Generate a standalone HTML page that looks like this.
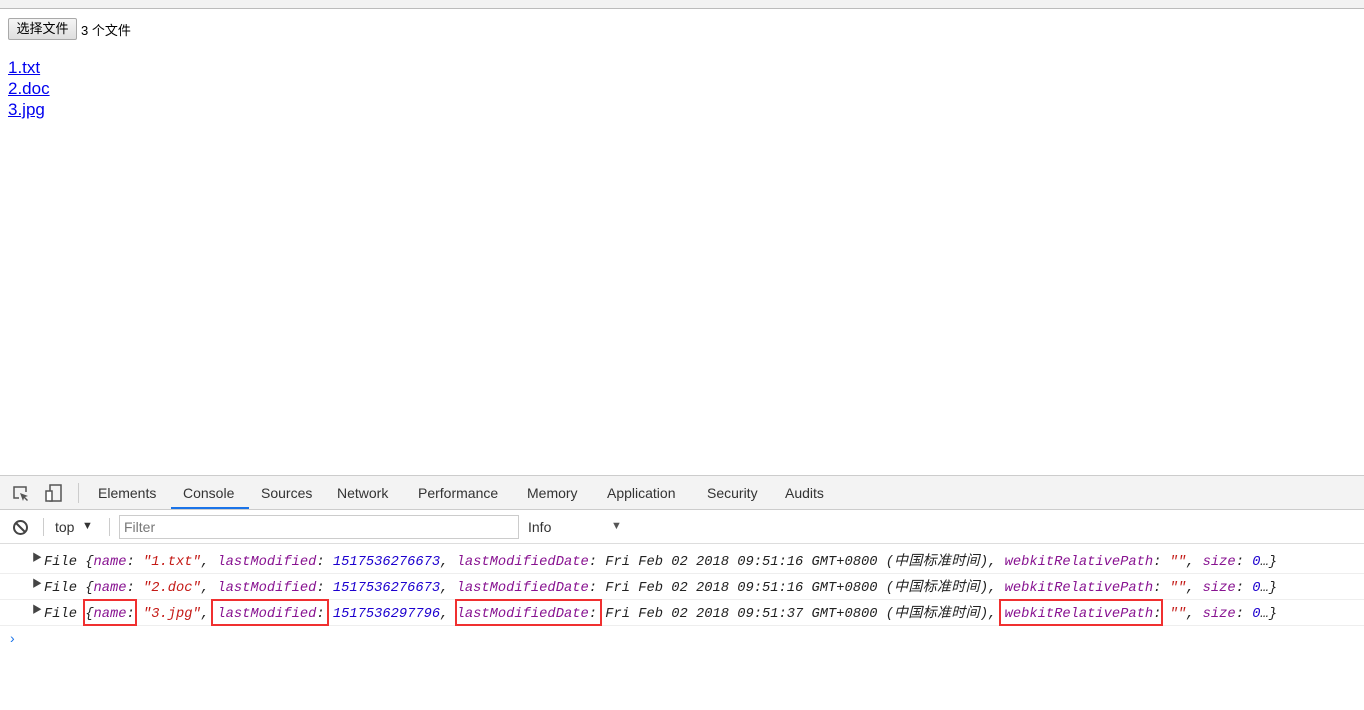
<!DOCTYPE html>
<html><head><meta charset="utf-8"><style>
*{margin:0;padding:0;box-sizing:border-box}
body{width:1364px;height:710px;background:#fff;position:relative;overflow:hidden;font-family:"Liberation Sans","Noto Sans CJK SC",sans-serif}
.bm{position:absolute;left:0;top:0;width:1364px;height:9px;background:#f2f2f2;border-bottom:1px solid #bbb}
.btn{position:absolute;left:8px;top:18px;width:69px;height:22px;border:1px solid #a9a9a9;background:linear-gradient(#f5f5f5,#dedede);font-size:13px;line-height:20px;text-align:center;border-radius:2px}
.cnt{position:absolute;left:81px;top:20px;font-size:13px}
.links{position:absolute;left:8px;top:57px;font-size:17px;line-height:21px}
.links a{color:#00e;text-decoration:underline;display:block}
.dt{position:absolute;left:0;top:475px;width:1364px;height:235px;border-top:1px solid #ccc}
.tb{height:34px;background:#f3f3f3;border-bottom:1px solid #ccc;position:relative;font-size:14px;color:#333}
.tb span{position:absolute;top:9px}
.ul{position:absolute;left:171px;top:31px;width:78px;height:2px;background:#1a73e8}
.fb{height:34px;border-bottom:1px solid #ddd;position:relative;font-size:14px;color:#333}
.row{position:absolute;left:0;width:1364px;height:26px;border-bottom:1px solid #eee;font-family:"Liberation Mono","Noto Sans CJK SC",monospace;font-style:italic;font-size:13.75px;line-height:24px;color:#222;white-space:pre;padding-left:44px}
.tri{position:absolute;left:32px;top:0;font-style:normal;font-size:10px;color:#444}
.k{color:#881391}.s{color:#c41a16}.n{color:#1c00cf}
.cj{font-family:"Noto Sans CJK SC",sans-serif;font-size:14px;letter-spacing:0.3px}
.box{position:absolute;border:2px solid #f03030}
</style></head><body>
<div class="bm"></div>
<div class="btn">选择文件</div>
<div class="cnt">3 个文件</div>
<div class="links"><a>1.txt</a><a>2.doc</a><a>3.jpg</a></div>
<div class="dt">
<div class="tb">
<svg style="position:absolute;left:12px;top:9px" width="18" height="18" viewBox="0 0 18 18"><path d="M7 13H2V2h12v5" fill="none" stroke="#555" stroke-width="1.5"/><path d="M8 8l8 3-3 1 3 3-1 1-3-3-1 3z" fill="#555"/></svg>
<svg style="position:absolute;left:44px;top:7px" width="20" height="20" viewBox="0 0 20 20"><rect x="6" y="2" width="11" height="16" fill="none" stroke="#555" stroke-width="1.5"/><rect x="2" y="8" width="6" height="10" fill="#fff" stroke="#555" stroke-width="1.5"/></svg>
<div style="position:absolute;left:78px;top:7px;width:1px;height:20px;background:#ccc"></div>
<span style="left:98px">Elements</span><span style="left:183px">Console</span><span style="left:261px">Sources</span><span style="left:337px">Network</span><span style="left:418px">Performance</span><span style="left:527px">Memory</span><span style="left:607px">Application</span><span style="left:707px">Security</span><span style="left:785px">Audits</span>
<div class="ul"></div>
</div>
<div class="fb">
<svg style="position:absolute;left:12px;top:9px" width="17" height="17" viewBox="0 0 17 17"><circle cx="8.5" cy="8.5" r="6.5" fill="none" stroke="#444" stroke-width="2"/><path d="M4 4l9 9" stroke="#444" stroke-width="2"/></svg>
<div style="position:absolute;left:43px;top:8px;width:1px;height:18px;background:#ccc"></div>
<span style="position:absolute;left:55px;top:9px">top</span><span style="position:absolute;left:82px;top:10px;font-size:11px">▼</span>
<div style="position:absolute;left:109px;top:8px;width:1px;height:18px;background:#ccc"></div>
<div style="position:absolute;left:119px;top:5px;width:400px;height:24px;border:1px solid #ccc;padding-left:4px;line-height:22px;color:#777">Filter</div>
<span style="position:absolute;left:528px;top:9px">Info</span><span style="position:absolute;left:611px;top:10px;font-size:11px;color:#555">▼</span>
</div>
<div class="row" style="top:72px"><span class="tri">▶</span>File {<span class="k">name</span>: <span class="s">"1.txt"</span>, <span class="k">lastModified</span>: <span class="n">1517536276673</span>, <span class="k">lastModifiedDate</span>: Fri Feb 02 2018 09:51:16 GMT+0800 (<span class="cj">中国标准时间</span>), <span class="k">webkitRelativePath</span>: <span class="s">""</span>, <span class="k">size</span>: <span class="n">0</span>…}</div>
<div class="row" style="top:98px"><span class="tri">▶</span>File {<span class="k">name</span>: <span class="s">"2.doc"</span>, <span class="k">lastModified</span>: <span class="n">1517536276673</span>, <span class="k">lastModifiedDate</span>: Fri Feb 02 2018 09:51:16 GMT+0800 (<span class="cj">中国标准时间</span>), <span class="k">webkitRelativePath</span>: <span class="s">""</span>, <span class="k">size</span>: <span class="n">0</span>…}</div>
<div class="row" style="top:124px"><span class="tri">▶</span>File {<span class="k">name</span>: <span class="s">"3.jpg"</span>, <span class="k">lastModified</span>: <span class="n">1517536297796</span>, <span class="k">lastModifiedDate</span>: Fri Feb 02 2018 09:51:37 GMT+0800 (<span class="cj">中国标准时间</span>), <span class="k">webkitRelativePath</span>: <span class="s">""</span>, <span class="k">size</span>: <span class="n">0</span>…}</div>
<div style="position:absolute;left:10px;top:154px;color:#1a73e8;font-size:14px">›</div>
</div>
<div class="box" style="left:83px;top:599px;width:54px;height:27px"></div>
<div class="box" style="left:211px;top:599px;width:118px;height:27px"></div>
<div class="box" style="left:455px;top:599px;width:147px;height:27px"></div>
<div class="box" style="left:999px;top:599px;width:164px;height:27px"></div>
</body></html>
